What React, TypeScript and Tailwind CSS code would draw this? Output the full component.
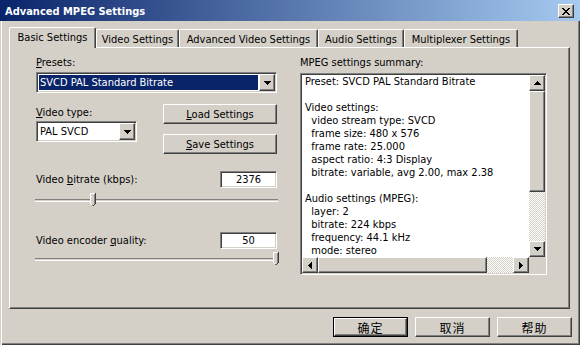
import React from "react";

const raised =
  "border border-t-white border-l-white border-r-[#404040] border-b-[#404040] shadow-[inset_-1px_-1px_0_#808080] bg-[#d4d0c8]";
const sunken =
  "border border-t-[#808080] border-l-[#808080] border-r-white border-b-white shadow-[inset_1px_1px_0_#404040,inset_-1px_-1px_0_#d4d0c8]";

function Tri({ dir }: { dir: "up" | "down" | "left" | "right" }) {
  const rows = [
    [0, 7],
    [1, 5],
    [2, 3],
    [3, 1],
  ];
  let rects: React.ReactNode[] = [];
  let w = 7,
    h = 4;
  if (dir === "down" || dir === "up") {
    rects = rows.map(([i, len]) => (
      <rect key={i} x={i} y={dir === "down" ? i : 3 - i} width={len} height={1} fill="#000" />
    ));
  } else {
    w = 4;
    h = 7;
    rects = rows.map(([i, len]) => (
      <rect key={i} y={i} x={dir === "right" ? i : 3 - i} height={len} width={1} fill="#000" />
    ));
  }
  return (
    <svg width={w} height={h} viewBox={`0 0 ${w} ${h}`} shapeRendering="crispEdges">
      {rects}
    </svg>
  );
}

function ArrowBtn({ dir, className = "" }: { dir: "up" | "down" | "left" | "right"; className?: string }) {
  return (
    <div className={`${raised} w-[16px] h-[16px] flex items-center justify-center shrink-0 ${className}`}>
      <Tri dir={dir} />
    </div>
  );
}

function Combo({ text, width, selected }: { text: string; width: string; selected?: boolean }) {
  return (
    <div className={`${sunken} ${width} h-[21px] bg-white flex p-[1px]`}>
      <div className="flex-1 p-px flex">
        <div
          className={`flex-1 flex items-center pl-[1px] ${selected ? "bg-[#0a246a] text-white" : "text-black"}`}
        >
          {text}
        </div>
      </div>
      <div className={`${raised} w-[16px] h-[17px] flex items-center justify-center`}>
        <Tri dir="down" />
      </div>
    </div>
  );
}

function Thumb() {
  return (
    <svg width="6" height="14" viewBox="0 0 6 14" shapeRendering="crispEdges">
      <polygon points="0,0 6,0 6,10 3,13 0,10" fill="#d4d0c8" />
      <rect x="0" y="0" width="5" height="1" fill="#fff" />
      <rect x="0" y="0" width="1" height="11" fill="#fff" />
      <rect x="1" y="11" width="1" height="1" fill="#fff" />
      <rect x="5" y="0" width="1" height="11" fill="#404040" />
      <rect x="4" y="1" width="1" height="10" fill="#808080" />
      <rect x="4" y="11" width="1" height="1" fill="#404040" />
      <rect x="3" y="12" width="1" height="1" fill="#404040" />
      <rect x="2" y="12" width="1" height="1" fill="#808080" />
    </svg>
  );
}

function Slider({ pos }: { pos: number }) {
  return (
    <div className="relative w-[243px] h-[14px] -ml-px">
      <div className="absolute left-0 right-0 top-[6px] h-[3px] border-t border-t-[#808080] border-b border-b-white bg-[#d4d0c8]" />
      <div className="absolute top-0" style={{ left: pos }}>
        <Thumb />
      </div>
    </div>
  );
}

function Btn({ children, className = "" }: { children: React.ReactNode; className?: string }) {
  return (
    <div className={`${raised} h-[20px] flex items-center justify-center ${className}`}>{children}</div>
  );
}

const summary = [
  "Preset: SVCD PAL Standard Bitrate",
  "",
  "Video settings:",
  "  video stream type: SVCD",
  "  frame size: 480 x 576",
  "  frame rate: 25.000",
  "  aspect ratio: 4:3 Display",
  "  bitrate: variable, avg 2.00, max 2.38",
  "",
  "Audio settings (MPEG):",
  "  layer: 2",
  "  bitrate: 224 kbps",
  "  frequency: 44.1 kHz",
  "  mode: stereo",
  "  CRC: off",
];

const checker =
  "bg-[image:repeating-conic-gradient(#ffffff_0%_25%,#d4d0c8_0%_50%)] bg-[length:2px_2px]";

export default function App() {
  const tabs = [
    { t: "Video Settings", w: "w-[83px]" },
    { t: "Advanced Video Settings", w: "w-[139px]" },
    { t: "Audio Settings", w: "w-[86px]" },
    { t: "Multiplexer Settings", w: "w-[114px]" },
  ];
  return (
    <div
      className="w-[580px] h-[345px] bg-[#d4d0c8] flex flex-col text-black font-['DejaVu_Sans_Condensed','Liberation_Sans',sans-serif] text-[11px] leading-[13px] shadow-[inset_1px_0_0_#d4d0c8,inset_2px_0_0_#ffffff,inset_-1px_-1px_0_#404040,inset_-2px_-2px_0_#808080]"
    >
      {/* Title bar */}
      <div className="h-[21px] shrink-0 flex items-center bg-[linear-gradient(to_right,#0a246a,#a6caf0)]">
        <span className="ml-[5px] mt-[2px] text-white font-bold text-[11px]">Advanced MPEG Settings</span>
        <div className={`${raised} ml-auto mr-[6px] mt-[1px] w-[16px] h-[14px] flex items-center justify-center`}>
          <svg width="8" height="7" viewBox="0 0 8 7" shapeRendering="crispEdges">
            {[0, 1, 2, 3, 4, 5, 6].map((i) => (
              <g key={i}>
                <rect x={i} y={i} width={2} height={1} fill="#000" />
                <rect x={6 - i} y={i} width={2} height={1} fill="#000" />
              </g>
            ))}
          </svg>
        </div>
      </div>

      {/* Tabs */}
      <div className="mt-[6px] ml-[9px] h-[21px] flex items-end relative z-10 -mb-px">
        <div className="h-[21px] w-[87px] bg-[#d4d0c8] border-l border-t border-r border-l-white border-t-white border-r-[#404040] shadow-[inset_-1px_0_0_#808080] rounded-t-[2px] flex justify-center pt-[3px]">
          Basic Settings
        </div>
        {tabs.map((tb) => (
          <div
            key={tb.t}
            className={`${tb.w} h-[18px] mb-px bg-[#d4d0c8] border-l border-t border-r border-l-white border-t-white border-r-[#404040] shadow-[inset_-1px_0_0_#808080] rounded-t-[2px] flex justify-center pt-[3px]`}
          >
            {tb.t}
          </div>
        ))}
      </div>

      {/* Panel */}
      <div className="ml-[9px] w-[561px] h-[262px] shrink-0 border border-t-white border-l-white border-r-[#404040] border-b-[#404040] shadow-[inset_-1px_-1px_0_#808080] flex pl-[26px] pt-[8px]">
        {/* Left column */}
        <div className="w-[241px] flex flex-col">
          <div>
            <u>P</u>resets:
          </div>
          <div className="mt-[3px]">
            <Combo text="SVCD PAL Standard Bitrate" width="w-[241px]" selected />
          </div>
          <div className="mt-[11px] flex">
            <div className="flex flex-col">
              <div className="mt-[2px]">
                <u>V</u>ideo type:
              </div>
              <div className="mt-[2px]">
                <Combo text="PAL SVCD" width="w-[101px]" />
              </div>
            </div>
            <div className="ml-auto flex flex-col gap-[10px]">
              <Btn className="w-[114px]">
                <span>
                  <u>L</u>oad Settings
                </span>
              </Btn>
              <Btn className="w-[114px]">
                <span>
                  <u>S</u>ave Settings
                </span>
              </Btn>
            </div>
          </div>
          <div className="mt-[17px] flex items-center">
            <div>
              Video <u>b</u>itrate (kbps):
            </div>
            <div className={`${sunken} ml-auto w-[57px] h-[17px] bg-white flex items-center justify-center`}>
              2376
            </div>
          </div>
          <div className="mt-[5px]">
            <Slider pos={55} />
          </div>
          <div className="mt-[25px] flex items-center">
            <div>
              Video encoder <u>q</u>uality:
            </div>
            <div className={`${sunken} ml-auto w-[57px] h-[17px] bg-white flex items-center justify-center`}>
              50
            </div>
          </div>
          <div className="mt-[3px]">
            <Slider pos={238} />
          </div>
        </div>

        {/* Right column */}
        <div className="ml-[23px] w-[247px] flex flex-col">
          <div>MPEG settings summary:</div>
          <div className={`${sunken} mt-[4px] w-[247px] h-[202px] bg-white p-[1px] flex flex-col`}>
            <div className="flex h-[182px]">
              <div className="flex-1 overflow-hidden pl-[3px] whitespace-pre leading-[13px]">
                {summary.map((l, i) => (
                  <div key={i} className="h-[13px]">
                    {l}
                  </div>
                ))}
              </div>
              <div className="w-[16px] flex flex-col">
                <ArrowBtn dir="up" />
                <div className={`${raised} h-[101px]`} />
                <div className={`flex-1 ${checker}`} />
                <ArrowBtn dir="down" />
              </div>
            </div>
            <div className="flex h-[16px]">
              <div className="flex-1 flex">
                <ArrowBtn dir="left" />
                <div className={`${raised} w-[169px] h-[16px]`} />
                <div className={`flex-1 ${checker}`} />
                <ArrowBtn dir="right" />
              </div>
              <div className="w-[16px] h-[16px] bg-[#d4d0c8]" />
            </div>
          </div>
        </div>
      </div>

      {/* Bottom buttons */}
      <div className="mt-[8px] flex justify-end pr-[8px] gap-[7px] font-['Noto_Sans_CJK_SC',sans-serif] text-[12px]">
        <div className="w-[75px] h-[20px] border border-black">
          <div className={`${raised} w-full h-full flex items-center justify-center tracking-[1px]`}>确定</div>
        </div>
        <Btn className="w-[75px] tracking-[1px]">取消</Btn>
        <Btn className="w-[75px] tracking-[1px]">帮助</Btn>
      </div>
    </div>
  );
}
